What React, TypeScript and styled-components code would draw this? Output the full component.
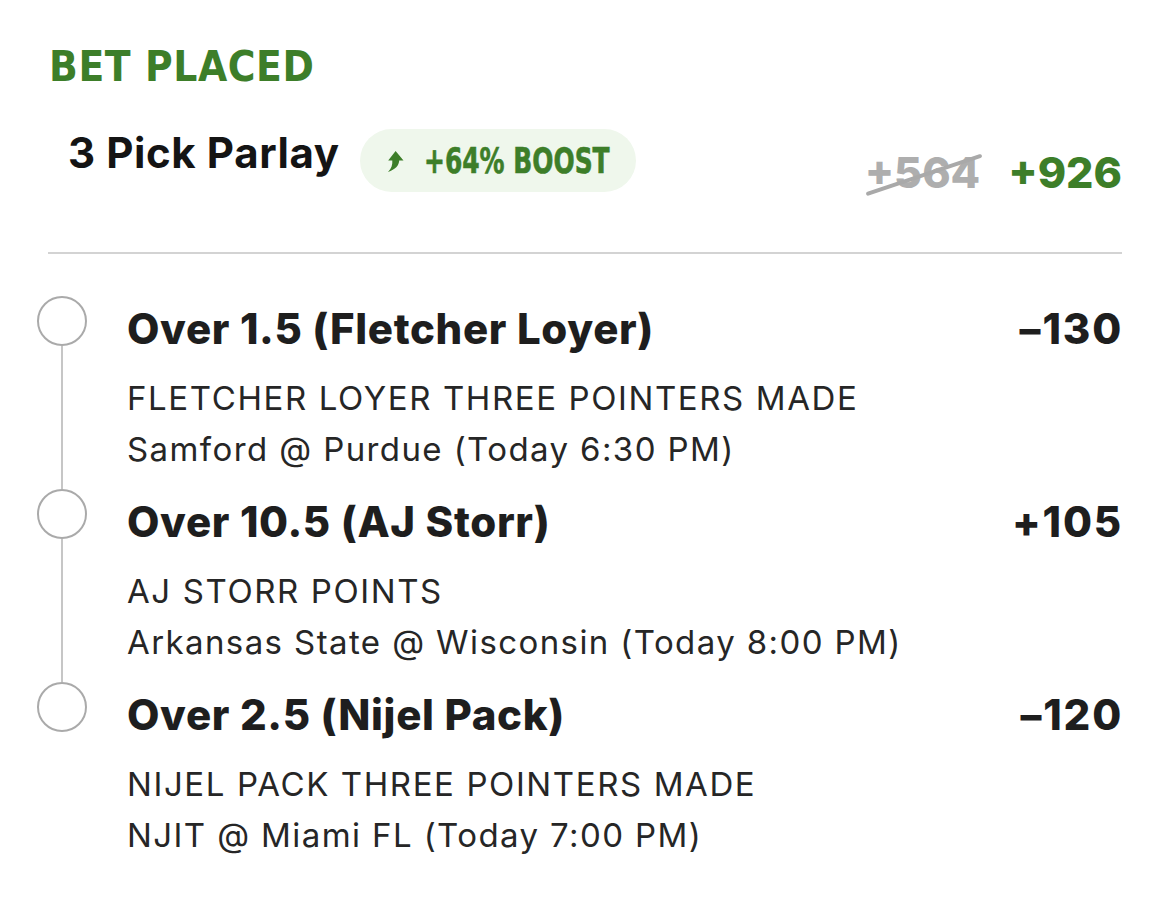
import React from 'react';
import styled, { createGlobalStyle } from 'styled-components';

const GREEN = '#3d7e29';

const GlobalStyle = createGlobalStyle`
  body {
    margin: 0;
    background: #ffffff;
    font-family: 'Inter', 'Liberation Sans', sans-serif;
    color: #1f1f1f;
  }
`;

const Page = styled.div`
  width: 1170px;
  height: 908px;
  box-sizing: border-box;
  padding: 40px 48px 0 48px;
  overflow: hidden;
`;

const Status = styled.h1`
  margin: 0 0 0 1px;
  font-family: 'DejaVu Sans Condensed', 'DejaVu Sans', sans-serif;
  font-stretch: condensed;
  font-weight: 700;
  font-size: 42px;
  line-height: 54px;
  color: ${GREEN};
  letter-spacing: 0.6px;
`;

const ParlayRow = styled.div`
  display: flex;
  align-items: flex-start;
  margin: 32px 0 0 20px;
  height: 126px;
`;

const ParlayTitle = styled.div`
  font-weight: 700;
  font-size: 42px;
  line-height: 48px;
  letter-spacing: 0.6px;
  color: #141414;
  margin-top: 3px;
`;

const BoostPill = styled.div`
  display: flex;
  align-items: center;
  gap: 20px;
  width: 276px;
  height: 63px;
  box-sizing: border-box;
  margin: 3px 0 0 20px;
  padding-left: 27px;
  border-radius: 32px;
  background: #eff7ec;
  overflow: hidden;
`;

const BoostText = styled.span`
  font-family: 'DejaVu Sans Condensed', 'DejaVu Sans', sans-serif;
  font-stretch: condensed;
  font-weight: 700;
  font-size: 36px;
  white-space: nowrap;
  color: ${GREEN};
  transform: scaleX(0.77);
  transform-origin: left center;
  -webkit-text-stroke: 0.6px ${GREEN};
`;

const OddsGroup = styled.div`
  margin-left: auto;
  display: flex;
  align-items: baseline;
  gap: 28px;
  margin-top: 22px;
`;

const OldOdds = styled.span`
  position: relative;
  font-weight: 800;
  font-size: 43px;
  line-height: 48px;
  color: #aeaeae;

  &::after {
    content: '';
    position: absolute;
    left: -2px;
    right: -4px;
    top: 52%;
    height: 4px;
    background: #a9a9a9;
    transform: rotate(-18.5deg);
    border-radius: 2px;
  }
`;

const NewOdds = styled.span`
  font-weight: 800;
  font-size: 43px;
  line-height: 48px;
  color: ${GREEN};
`;

const Divider = styled.hr`
  margin: 0;
  border: none;
  height: 2px;
  background: #d3d3d3;
`;

const Legs = styled.div`
  margin: 51px 0 0 -12px;
`;

const Leg = styled.div`
  display: grid;
  grid-template-columns: 52px 1fr auto;
  column-gap: 39px;
  padding-bottom: 23px;
`;

const Rail = styled.div`
  display: flex;
  flex-direction: column;
  align-items: center;
  margin-top: -9px;
  margin-bottom: -14px;
  grid-row: span 3;
`;

const Dot = styled.div`
  width: 50px;
  height: 50px;
  box-sizing: border-box;
  border: 2.5px solid #aaaaaa;
  border-radius: 50%;
  flex-shrink: 0;
`;

const Connector = styled.div<{ $hidden?: boolean }>`
  width: 2px;
  flex: 1;
  background: ${({ $hidden }) => ($hidden ? 'transparent' : '#c6c6c6')};
`;

const LegTitle = styled.div`
  font-weight: 800;
  font-size: 42px;
  line-height: 48px;
  letter-spacing: 0.65px;
  color: #1e1e1e;
`;

const LegOdds = styled.div`
  font-weight: 800;
  font-size: 42px;
  line-height: 48px;
  letter-spacing: 1.8px;
  margin-right: -1px;
  color: #1e1e1e;
  text-align: right;
`;

const Market = styled.div`
  grid-column: 2 / span 2;
  margin-top: 20px;
  font-size: 33px;
  line-height: 51px;
  letter-spacing: 1.6px;
  color: #262626;
`;

const Matchup = styled.div`
  grid-column: 2 / span 2;
  font-size: 33px;
  line-height: 51px;
  letter-spacing: 1.4px;
  color: #262626;
`;

const BoostArrow = () => (
  <svg width="17" height="21" viewBox="0 0 17 21" style={{ flexShrink: 0, marginTop: 1 }}>
    <path
      d="M8.6 0 L16.5 9.6 L12.2 9.6 C12 14.6 8.4 18.6 1 21 C4.6 17.6 5.6 13.6 5.3 9.6 L1.2 9.6 Z"
      fill={GREEN}
    />
  </svg>
);

const legs = [
  {
    title: 'Over 1.5 (Fletcher Loyer)',
    odds: '\u2013130',
    market: 'FLETCHER LOYER THREE POINTERS MADE',
    matchup: 'Samford @ Purdue (Today 6:30 PM)',
  },
  {
    title: 'Over 10.5 (AJ Storr)',
    odds: '+105',
    market: 'AJ STORR POINTS',
    matchup: 'Arkansas State @ Wisconsin (Today 8:00 PM)',
  },
  {
    title: 'Over 2.5 (Nijel Pack)',
    odds: '\u2013120',
    market: 'NIJEL PACK THREE POINTERS MADE',
    matchup: 'NJIT @ Miami FL (Today 7:00 PM)',
  },
];

const App: React.FC = () => (
  <>
    <GlobalStyle />
    <Page>
      <Status>BET PLACED</Status>

      <ParlayRow>
        <ParlayTitle>3 Pick Parlay</ParlayTitle>
        <BoostPill>
          <BoostArrow />
          <BoostText>+64% BOOST</BoostText>
        </BoostPill>
        <OddsGroup>
          <OldOdds>+564</OldOdds>
          <NewOdds>+926</NewOdds>
        </OddsGroup>
      </ParlayRow>

      <Divider />

      <Legs>
        {legs.map((leg, i) => (
          <Leg key={leg.title}>
            <Rail>
              <Dot />
              <Connector $hidden={i === legs.length - 1} />
            </Rail>
            <LegTitle>{leg.title}</LegTitle>
            <LegOdds>{leg.odds}</LegOdds>
            <Market>{leg.market}</Market>
            <Matchup>{leg.matchup}</Matchup>
          </Leg>
        ))}
      </Legs>
    </Page>
  </>
);

export default App;
